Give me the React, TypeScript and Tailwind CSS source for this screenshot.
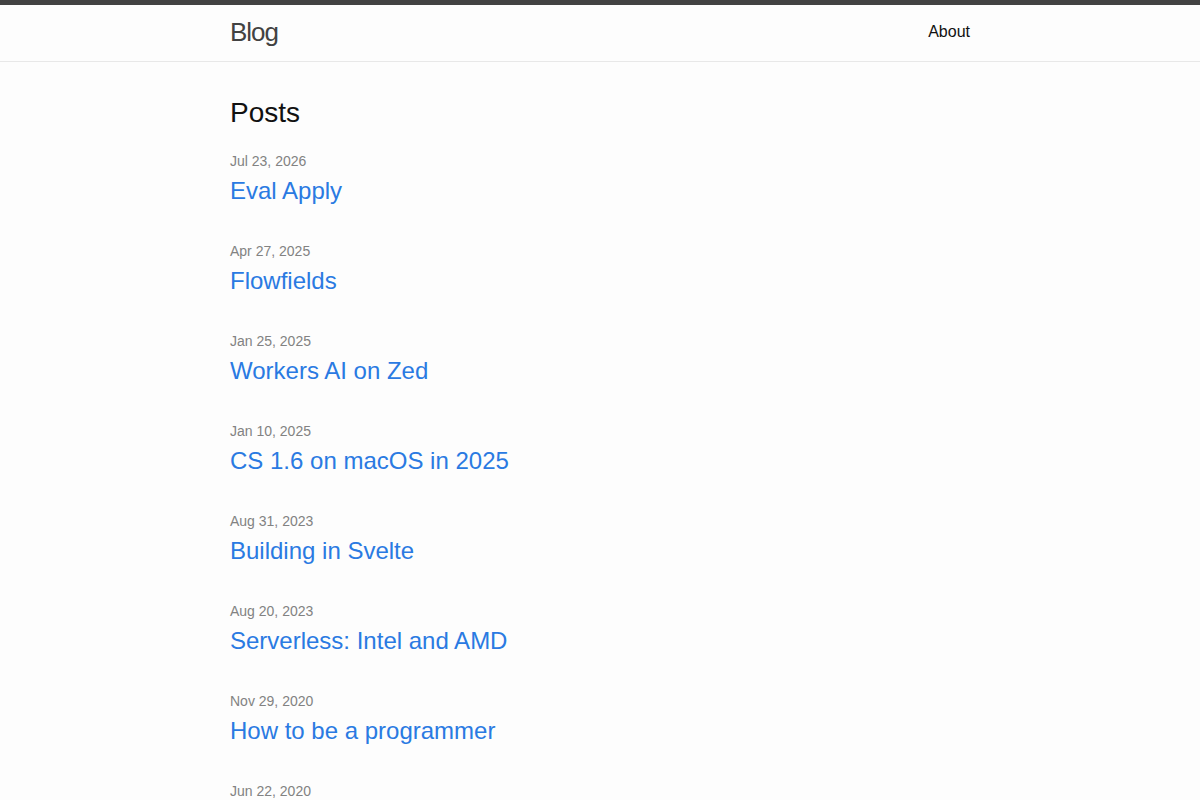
const POSTS = [
    { date: "Jul 23, 2026", title: "Eval Apply" },
    { date: "Apr 27, 2025", title: "Flowfields" },
    { date: "Jan 25, 2025", title: "Workers AI on Zed" },
    { date: "Jan 10, 2025", title: "CS 1.6 on macOS in 2025" },
    { date: "Aug 31, 2023", title: "Building in Svelte" },
    { date: "Aug 20, 2023", title: "Serverless: Intel and AMD" },
    { date: "Nov 29, 2020", title: "How to be a programmer" },
    { date: "Jun 22, 2020", title: "Notes on learning" },
];

export default function App() {
    return (
        <div className="min-h-screen bg-[#fdfdfd] text-[#111] text-base leading-normal font-['Liberation_Sans',Arial,sans-serif]">
            <header className="border-t-[5px] border-b border-t-[#424242] border-b-[#e8e8e8] min-h-[62px]">
                <div className="max-w-[740px] mx-auto flex items-start justify-between">
                    <a href="#" className="text-[26px] leading-[54px] tracking-[-1px] font-light text-[#424242]">
                        Blog
                    </a>
                    <nav className="leading-[54px]">
                        <a href="#" className="text-[#111]">About</a>
                    </nav>
                </div>
            </header>

            <main className="py-[30px]">
                <div className="max-w-[740px] mx-auto">
                    <h1 className="text-[28px] leading-[42px] mb-[15px]">Posts</h1>
                    <ul>
                        {POSTS.map((post) => (
                            <li key={post.title} className="mb-[30px]">
                                <div className="text-sm leading-6 text-[#828282]">{post.date}</div>
                                <h3 className="text-2xl leading-9">
                                    <a href="#" className="text-[#2a7ae2]">{post.title}</a>
                                </h3>
                            </li>
                        ))}
                    </ul>
                </div>
            </main>
        </div>
    );
}
